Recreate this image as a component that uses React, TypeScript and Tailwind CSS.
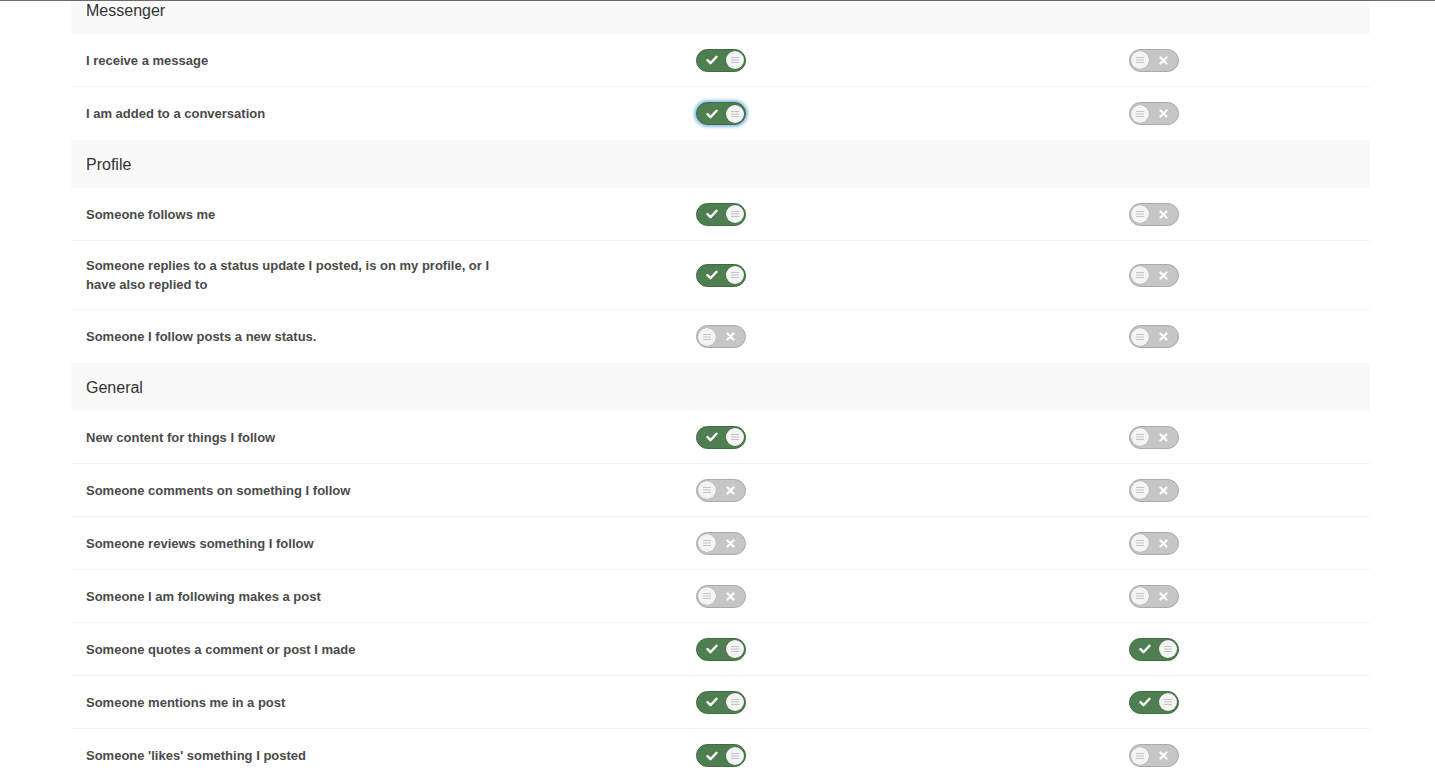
import React from "react";

type Row = { label: string; a: boolean; b: boolean; focus?: boolean; tall?: boolean };
type Section = { title: string; rows: Row[] };

const sections: Section[] = [
  {
    title: "Messenger",
    rows: [
      { label: "I receive a message", a: true, b: false },
      { label: "I am added to a conversation", a: true, b: false, focus: true },
    ],
  },
  {
    title: "Profile",
    rows: [
      { label: "Someone follows me", a: true, b: false },
      {
        label: "Someone replies to a status update I posted, is on my profile, or I have also replied to",
        a: true,
        b: false,
        tall: true,
      },
      { label: "Someone I follow posts a new status.", a: false, b: false },
    ],
  },
  {
    title: "General",
    rows: [
      { label: "New content for things I follow", a: true, b: false },
      { label: "Someone comments on something I follow", a: false, b: false },
      { label: "Someone reviews something I follow", a: false, b: false },
      { label: "Someone I am following makes a post", a: false, b: false },
      { label: "Someone quotes a comment or post I made", a: true, b: true },
      { label: "Someone mentions me in a post", a: true, b: true },
      { label: "Someone 'likes' something I posted", a: true, b: false },
    ],
  },
];

function Knob() {
  return (
    <span className="flex h-[18px] w-[18px] items-center justify-center rounded-full bg-[#f4f4f4] shadow-[0_0_1px_rgba(0,0,0,0.3)]">
      <svg width="10" height="8" viewBox="0 0 10 8">
        <path d="M1 1.5h8M1 4h8M1 6.5h8" stroke="#c4c4c4" strokeWidth="1" />
      </svg>
    </span>
  );
}

function Toggle({ on, focus }: { on: boolean; focus?: boolean }) {
  if (on) {
    return (
      <span
        className={
          "flex h-[23px] w-[50px] items-center justify-between rounded-full border border-[#3f6b40] bg-[#4f7e50] pl-[9px] pr-[1px] " +
          (focus ? "shadow-[0_0_3px_2px_rgba(102,175,233,0.75)]" : "")
        }
      >
        <svg width="12" height="10" viewBox="0 0 12 10">
          <path d="M1.5 5.2l3 3 6-6.4" fill="none" stroke="#ffffff" strokeWidth="2.4" strokeLinecap="round" strokeLinejoin="round" />
        </svg>
        <Knob />
      </span>
    );
  }
  return (
    <span className="flex h-[23px] w-[50px] items-center justify-between rounded-full border border-[#a9a9a9] bg-[#c6c6c6] pl-[1px] pr-[10px]">
      <Knob />
      <svg width="9" height="9" viewBox="0 0 9 9">
        <path d="M1.5 1.5l6 6M7.5 1.5l-6 6" stroke="#ffffff" strokeWidth="2.2" strokeLinecap="round" />
      </svg>
    </span>
  );
}

export default function App() {
  return (
    <div
      className="h-[776px] w-[1435px] overflow-hidden border-t border-[#6b6b6b] bg-white"
      style={{ fontFamily: '"Liberation Sans", Arial, Helvetica, sans-serif' }}
    >
      <div className="ml-[71px] mr-[65px] -mt-[15px]">
        {sections.map((s) => (
          <div key={s.title}>
            <div className="flex h-[48px] items-center bg-[#f9f9f9] px-[15px] pt-[2px] text-[16px] text-[#333333]">
              {s.title}
            </div>
            {s.rows.map((r, i) => (
              <div
                key={r.label}
                className={
                  "grid grid-cols-3 items-center " +
                  (r.tall ? "h-[69px] " : "h-[53px] ") +
                  (i < s.rows.length - 1 ? "border-b border-[#f3f3f3]" : "")
                }
              >
                <div className="pl-[15px] pr-[8px] text-[13px] font-bold leading-[19px] text-[#4a4a4a]">{r.label}</div>
                <div className="flex justify-center">
                  <Toggle on={r.a} focus={r.focus} />
                </div>
                <div className="flex justify-center">
                  <Toggle on={r.b} />
                </div>
              </div>
            ))}
          </div>
        ))}
      </div>
    </div>
  );
}
